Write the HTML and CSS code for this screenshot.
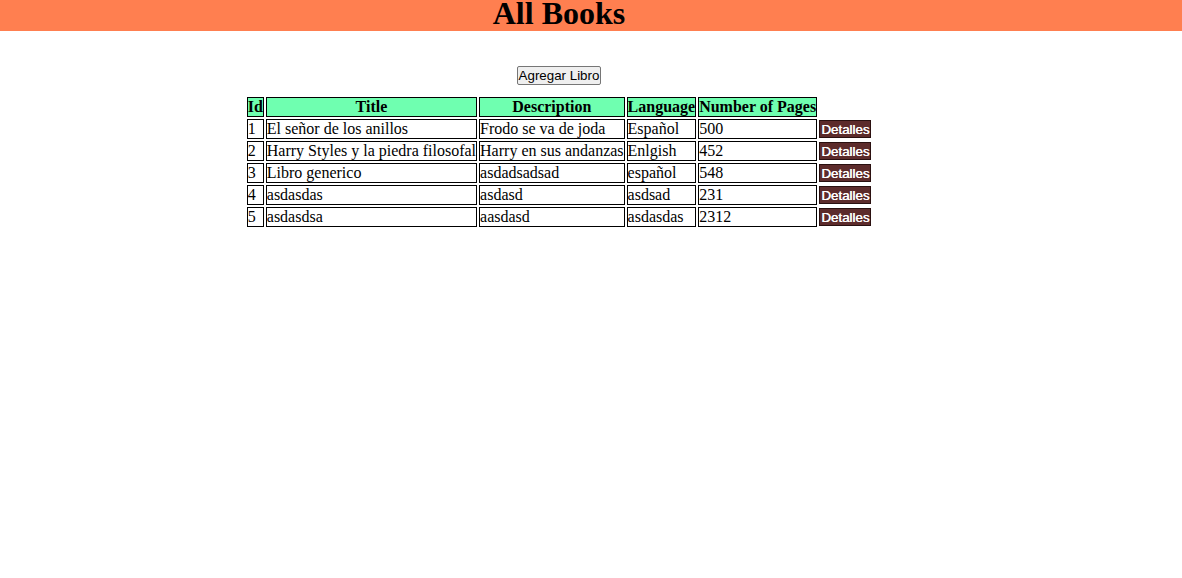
FILE: index.html
```html
<!DOCTYPE html>
<html>
<head>
<meta charset="utf-8">
<link rel="stylesheet" href="styles.css">
</head>
<body>
<header class="topbar"><h1 class="title">All Books</h1></header>
<main class="content">
  <div class="actions"><button class="add-btn">Agregar Libro</button></div>
  <table class="books">
    <thead>
      <tr><th>Id</th><th>Title</th><th>Description</th><th>Language</th><th>Number of Pages</th></tr>
    </thead>
    <tbody>
      <tr><td>1</td><td>El señor de los anillos</td><td>Frodo se va de joda</td><td>Español</td><td>500</td><td class="act"><button class="det-btn">Detalles</button></td></tr>
      <tr><td>2</td><td>Harry Styles y la piedra filosofal</td><td>Harry en sus andanzas</td><td>Enlgish</td><td>452</td><td class="act"><button class="det-btn">Detalles</button></td></tr>
      <tr><td>3</td><td>Libro generico</td><td>asdadsadsad</td><td>español</td><td>548</td><td class="act"><button class="det-btn">Detalles</button></td></tr>
      <tr><td>4</td><td>asdasdas</td><td>asdasd</td><td>asdsad</td><td>231</td><td class="act"><button class="det-btn">Detalles</button></td></tr>
      <tr><td>5</td><td>asdasdsa</td><td>aasdasd</td><td>asdasdas</td><td>2312</td><td class="act"><button class="det-btn">Detalles</button></td></tr>
    </tbody>
  </table>
</main>
</body>
</html>
```
FILE: styles.css
```css
html, body {
  margin: 0;
  padding: 0;
  background: #fff;
  font-family: "Liberation Serif", "Times New Roman", serif;
  font-size: 16px;
  color: #000;
}
.topbar {
  background: #ff7f50;
  height: 31px;
  padding-right: 64px;
}
.title {
  margin: 0;
  font-size: 32px;
  line-height: 27px;
  text-align: center;
  font-weight: bold;
}
.content {
  width: 1118px;
  display: flex;
  flex-direction: column;
  align-items: center;
  padding-top: 35px;
}
.actions {
  margin-bottom: 10px;
}
.add-btn {
  font-family: "Liberation Sans", Arial, sans-serif;
  font-size: 13.333px;
  padding: 1px 1px;
  border: 1px solid #767676;
  border-radius: 2px;
  background: #efefef;
  color: #000;
  line-height: 15px;
}
.books {
  border-collapse: separate;
  border-spacing: 2px;
}
.books th, .books td {
  border: 1px solid #000;
  padding: 0;
  line-height: 18px;
  white-space: nowrap;
}
.books th {
  background: #6fffb0;
  font-weight: bold;
  text-align: center;
}
.books td {
  text-align: left;
}
.books td.act {
  border: none;
  padding: 1px 0 0 0;
  vertical-align: top;
}
.det-btn {
  display: block;
  font-family: "Liberation Sans", Arial, sans-serif;
  font-size: 13.333px;
  line-height: 15px;
  color: #fff;
  text-shadow: 0.5px 0 0 #fff;
  background: #5c2b2b;
  border: 1px solid #2a1010;
  padding: 0 1px;
  margin: 0;
  height: 18px;
}
```
